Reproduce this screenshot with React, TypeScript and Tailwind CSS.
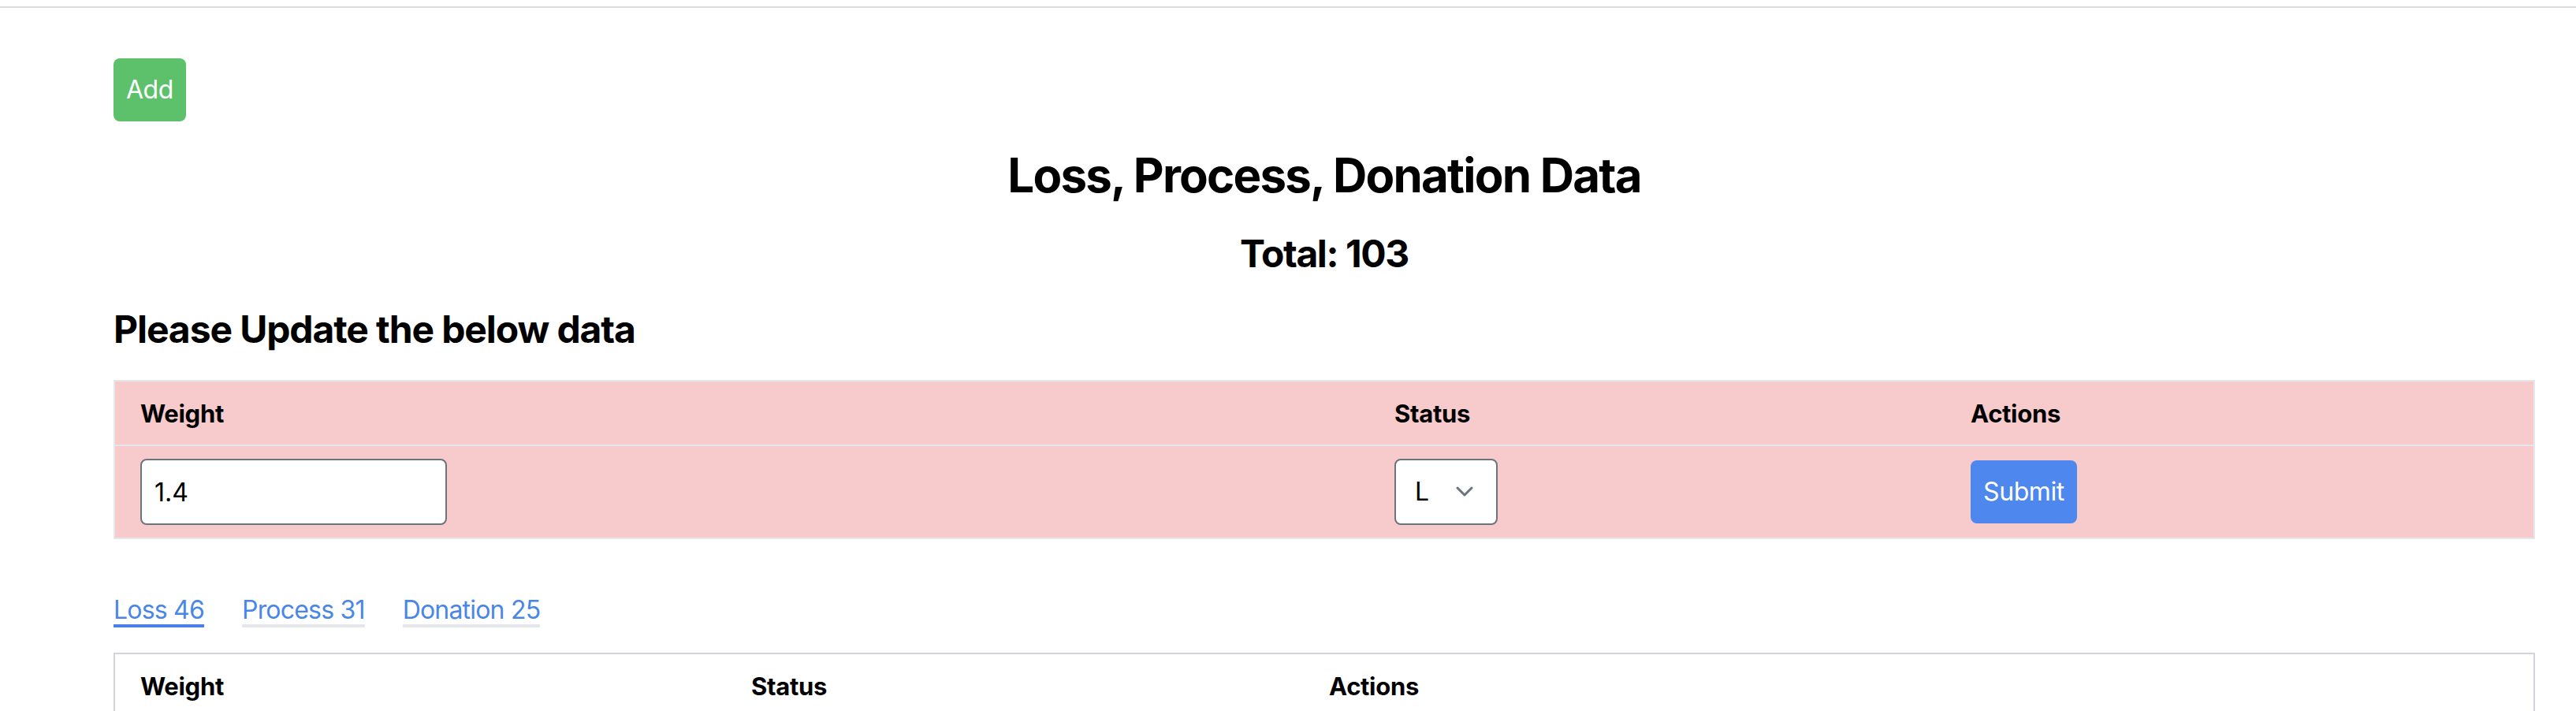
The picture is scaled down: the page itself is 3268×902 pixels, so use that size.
import { useState } from "react";

const tabs = [
  { id: "loss", label: "Loss", count: 46 },
  { id: "process", label: "Process", count: 31 },
  { id: "donation", label: "Donation", count: 25 },
];

export default function App() {
  // ---------------- STATE ----------------
  const [weight, setWeight] = useState("1.4");
  const [status, setStatus] = useState("L");
  const [active, setActive] = useState("loss");

  return (
    <div className="h-screen overflow-hidden bg-white text-black font-['Inter','Liberation_Sans',sans-serif]">
      {/* top bar line */}
      <div className="h-[10px] border-b-2 border-[#dcdcdc]"></div>

      <div className="ml-[144px] w-[3072px] flex flex-col">
        <button className="self-start mt-[64px] px-4 py-4 rounded-lg bg-[#5dc16c] text-white text-[32px] leading-[48px] tracking-[-0.5px]">
          Add
        </button>

        <h1 className="mt-8 text-center text-[60px] leading-[72px] font-bold tracking-[-1.8px]">
          Loss, Process, Donation Data
        </h1>
        <h2 className="mt-8 text-center text-[48px] leading-[64px] font-bold tracking-[-1.4px]">Total: 103</h2>

        <h2 className="mt-8 text-[48px] leading-[64px] font-bold tracking-[-1.1px]">Please Update the below data</h2>

        {/* Tabla de actualización */}
        <div className="mt-8 border-2 border-[#e5e7eb] bg-[#f7cbcb]">
          <div className="grid grid-cols-[1591px_731px_1fr] border-b-2 border-[#e5e7eb] text-[31px] leading-[40px] font-bold tracking-[-0.3px]">
            <div className="px-8 pt-[21px] pb-[19px]">Weight</div>
            <div className="px-8 pt-[21px] pb-[19px]">Status</div>
            <div className="px-8 pt-[21px] pb-[19px]">Actions</div>
          </div>
          <div className="grid grid-cols-[1591px_731px_1fr] items-center text-[32px]">
            <div className="px-8 py-4">
              <input
                value={weight}
                onChange={(e) => setWeight(e.target.value)}
                className="w-[389px] h-[84px] px-4 bg-white border-2 border-[#6b7280] rounded-lg text-[32px] outline-none"
              />
            </div>
            <div className="px-8 py-4">
              <div className="relative w-[131px] h-[84px]">
                <select
                  value={status}
                  onChange={(e) => setStatus(e.target.value)}
                  className="appearance-none w-full h-full pl-6 bg-white border-2 border-[#6b7280] rounded-lg text-[32px] outline-none"
                >
                  <option value="L">L</option>
                  <option value="P">P</option>
                  <option value="D">D</option>
                </select>
                <svg className="absolute right-[31px] top-[35px] w-[22px] h-[14px] pointer-events-none" viewBox="0 0 22 14" fill="none">
                  <polyline points="2,2 11,11 20,2" stroke="#6b7280" strokeWidth="3" strokeLinecap="round" strokeLinejoin="round" />
                </svg>
              </div>
            </div>
            <div className="px-8 py-4">
              <button className="px-4 py-4 rounded-lg bg-[#4e87ee] text-white text-[32px] leading-[48px] tracking-[-0.4px]">Submit</button>
            </div>
          </div>
        </div>

        {/* Tabs */}
        <div className="mt-[72px] flex gap-12">
          {tabs.map((t) => (
            <button
              key={t.id}
              onClick={() => setActive(t.id)}
              className={
                active === t.id
                  ? "text-[32px] leading-[36px] tracking-[-0.8px] text-[#4a86e8] border-b-4 border-[#4a80e8]"
                  : "text-[32px] leading-[36px] tracking-[-0.8px] text-[#4a86e8] border-b-4 border-[#e5e7eb]"
              }
            >
              {t.label} {t.count}
            </button>
          ))}
        </div>

        {/* Tabla de datos */}
        <div className="mt-8 border-2 border-[#d1d5db]">
          <div className="grid grid-cols-[775px_733px_1fr] text-[31px] leading-[40px] font-bold tracking-[-0.3px]">
            <div className="px-8 pt-[21px] pb-[19px]">Weight</div>
            <div className="px-8 pt-[21px] pb-[19px]">Status</div>
            <div className="px-8 pt-[21px] pb-[19px]">Actions</div>
          </div>
        </div>
      </div>
    </div>
  );
}
